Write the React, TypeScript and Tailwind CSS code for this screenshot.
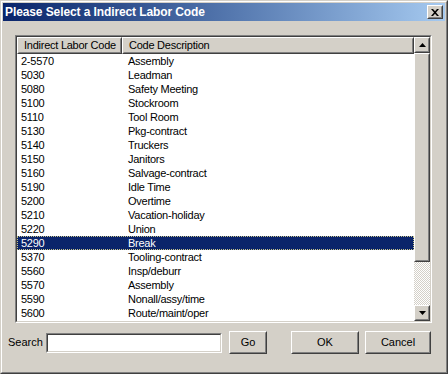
import React from "react";

const rows: [string, string][] = [
    ["2-5570", "Assembly"],
    ["5030", "Leadman"],
    ["5080", "Safety Meeting"],
    ["5100", "Stockroom"],
    ["5110", "Tool Room"],
    ["5130", "Pkg-contract"],
    ["5140", "Truckers"],
    ["5150", "Janitors"],
    ["5160", "Salvage-contract"],
    ["5190", "Idle Time"],
    ["5200", "Overtime"],
    ["5210", "Vacation-holiday"],
    ["5220", "Union"],
    ["5290", "Break"],
    ["5370", "Tooling-contract"],
    ["5560", "Insp/deburr"],
    ["5570", "Assembly"],
    ["5590", "Nonall/assy/time"],
    ["5600", "Route/maint/oper"],
];

const SELECTED = "5290";

/* Classic raised 3D box: white/dark outer, light/gray inner */
function Raised({ className = "", children }: { className?: string; children?: React.ReactNode }) {
    return (
        <div className={`border border-t-white border-l-white border-r-[#404040] border-b-[#404040] bg-[#d4d0c8] ${className}`}>
            <div className="w-full h-full border border-t-[#d4d0c8] border-l-[#d4d0c8] border-r-[#808080] border-b-[#808080] flex items-center justify-center">
                {children}
            </div>
        </div>
    );
}

/* Classic sunken 3D box */
function Sunken({ className = "", children }: { className?: string; children?: React.ReactNode }) {
    return (
        <div className={`border border-t-[#808080] border-l-[#808080] border-r-white border-b-white ${className}`}>
            <div className="w-full h-full border border-t-[#404040] border-l-[#404040] border-r-[#d4d0c8] border-b-[#d4d0c8] bg-white flex">
                {children}
            </div>
        </div>
    );
}

function Arrow({ down = false }: { down?: boolean }) {
    return (
        <svg width="7" height="4" viewBox="0 0 7 4" className="block">
            {down ? <path d="M0 0h7L3.5 4z" fill="#000" /> : <path d="M0 4h7L3.5 0z" fill="#000" />}
        </svg>
    );
}

export default function App() {
    return (
        <div
            className="w-[448px] h-[374px] bg-[#d4d0c8] border border-t-[#d4d0c8] border-l-[#d4d0c8] border-r-[#404040] border-b-[#404040] text-black"
            style={{ fontFamily: '"Liberation Sans", Arial, sans-serif' }}
        >
            <div className="h-full border border-t-white border-l-white border-r-[#808080] border-b-[#808080] p-px flex flex-col">
                {/* Title bar */}
                <div className="h-[18px] bg-gradient-to-r from-[#0a246a] to-[#a6caf0] flex items-center justify-between pl-[2px] pr-[2px]">
                    <span className="text-white font-bold text-[12px] leading-none tracking-[-0.1px] whitespace-nowrap">
                        Please Select a Indirect Labor Code
                    </span>
                    <Raised className="w-[16px] h-[14px]">
                        <svg width="8" height="7" viewBox="0 0 8 7" className="block">
                            <path d="M0 0h2l2 2.2L6 0h2L5 3.5 8 7H6L4 4.8 2 7H0l3-3.5z" fill="#000" />
                        </svg>
                    </Raised>
                </div>

                {/* Body */}
                <div className="flex-1 flex flex-col pl-[12px] pr-[13px] pt-[14px]">
                    <Sunken className="h-[288px]">
                        <div className="flex-1 flex flex-col text-[11px] tracking-[-0.25px] whitespace-nowrap">
                            {/* Column headers */}
                            <div className="flex h-[17px]">
                                <Raised className="w-[105px] h-[17px]">
                                    <span className="w-full pl-[5px] leading-none">Indirect Labor Code</span>
                                </Raised>
                                <Raised className="flex-1 h-[17px]">
                                    <span className="w-full pl-[5px] leading-none">Code Description</span>
                                </Raised>
                            </div>
                            {rows.map(([code, desc]) => {
                                const sel = code === SELECTED;
                                return (
                                    <div
                                        key={code + desc}
                                        className={`flex h-[14px] leading-[14px] ${sel ? "bg-[#0a246a] text-white outline outline-1 outline-dotted outline-offset-[-1px] outline-[#c8c48a]" : ""}`}
                                    >
                                        <span className="w-[105px] pl-[4px]">{code}</span>
                                        <span className="pl-[6px]">{desc}</span>
                                    </div>
                                );
                            })}
                        </div>

                        {/* Vertical scrollbar */}
                        <div className="w-[16px] flex flex-col">
                            <Raised className="h-[16px]">
                                <Arrow />
                            </Raised>
                            <Raised className="h-[209px]" />
                            <div className="flex-1 bg-[repeating-conic-gradient(#ffffff_0_25%,#d4d0c8_0_50%)] bg-[length:2px_2px]" />
                            <Raised className="h-[16px]">
                                <Arrow down />
                            </Raised>
                        </div>
                    </Sunken>

                    {/* Bottom bar */}
                    <div className="flex items-center mt-[8px] -ml-[7px] text-[11px]">
                        <span className="w-[38px]">Search</span>
                        <Sunken className="w-[176px] h-[20px]" />
                        <Raised className="w-[38px] h-[23px] ml-[7px]">
                            <span className="leading-none">Go</span>
                        </Raised>
                        <Raised className="w-[68px] h-[23px] ml-[24px]">
                            <span className="leading-none">OK</span>
                        </Raised>
                        <Raised className="w-[66px] h-[23px] ml-[6px]">
                            <span className="leading-none">Cancel</span>
                        </Raised>
                    </div>
                </div>
            </div>
        </div>
    );
}
